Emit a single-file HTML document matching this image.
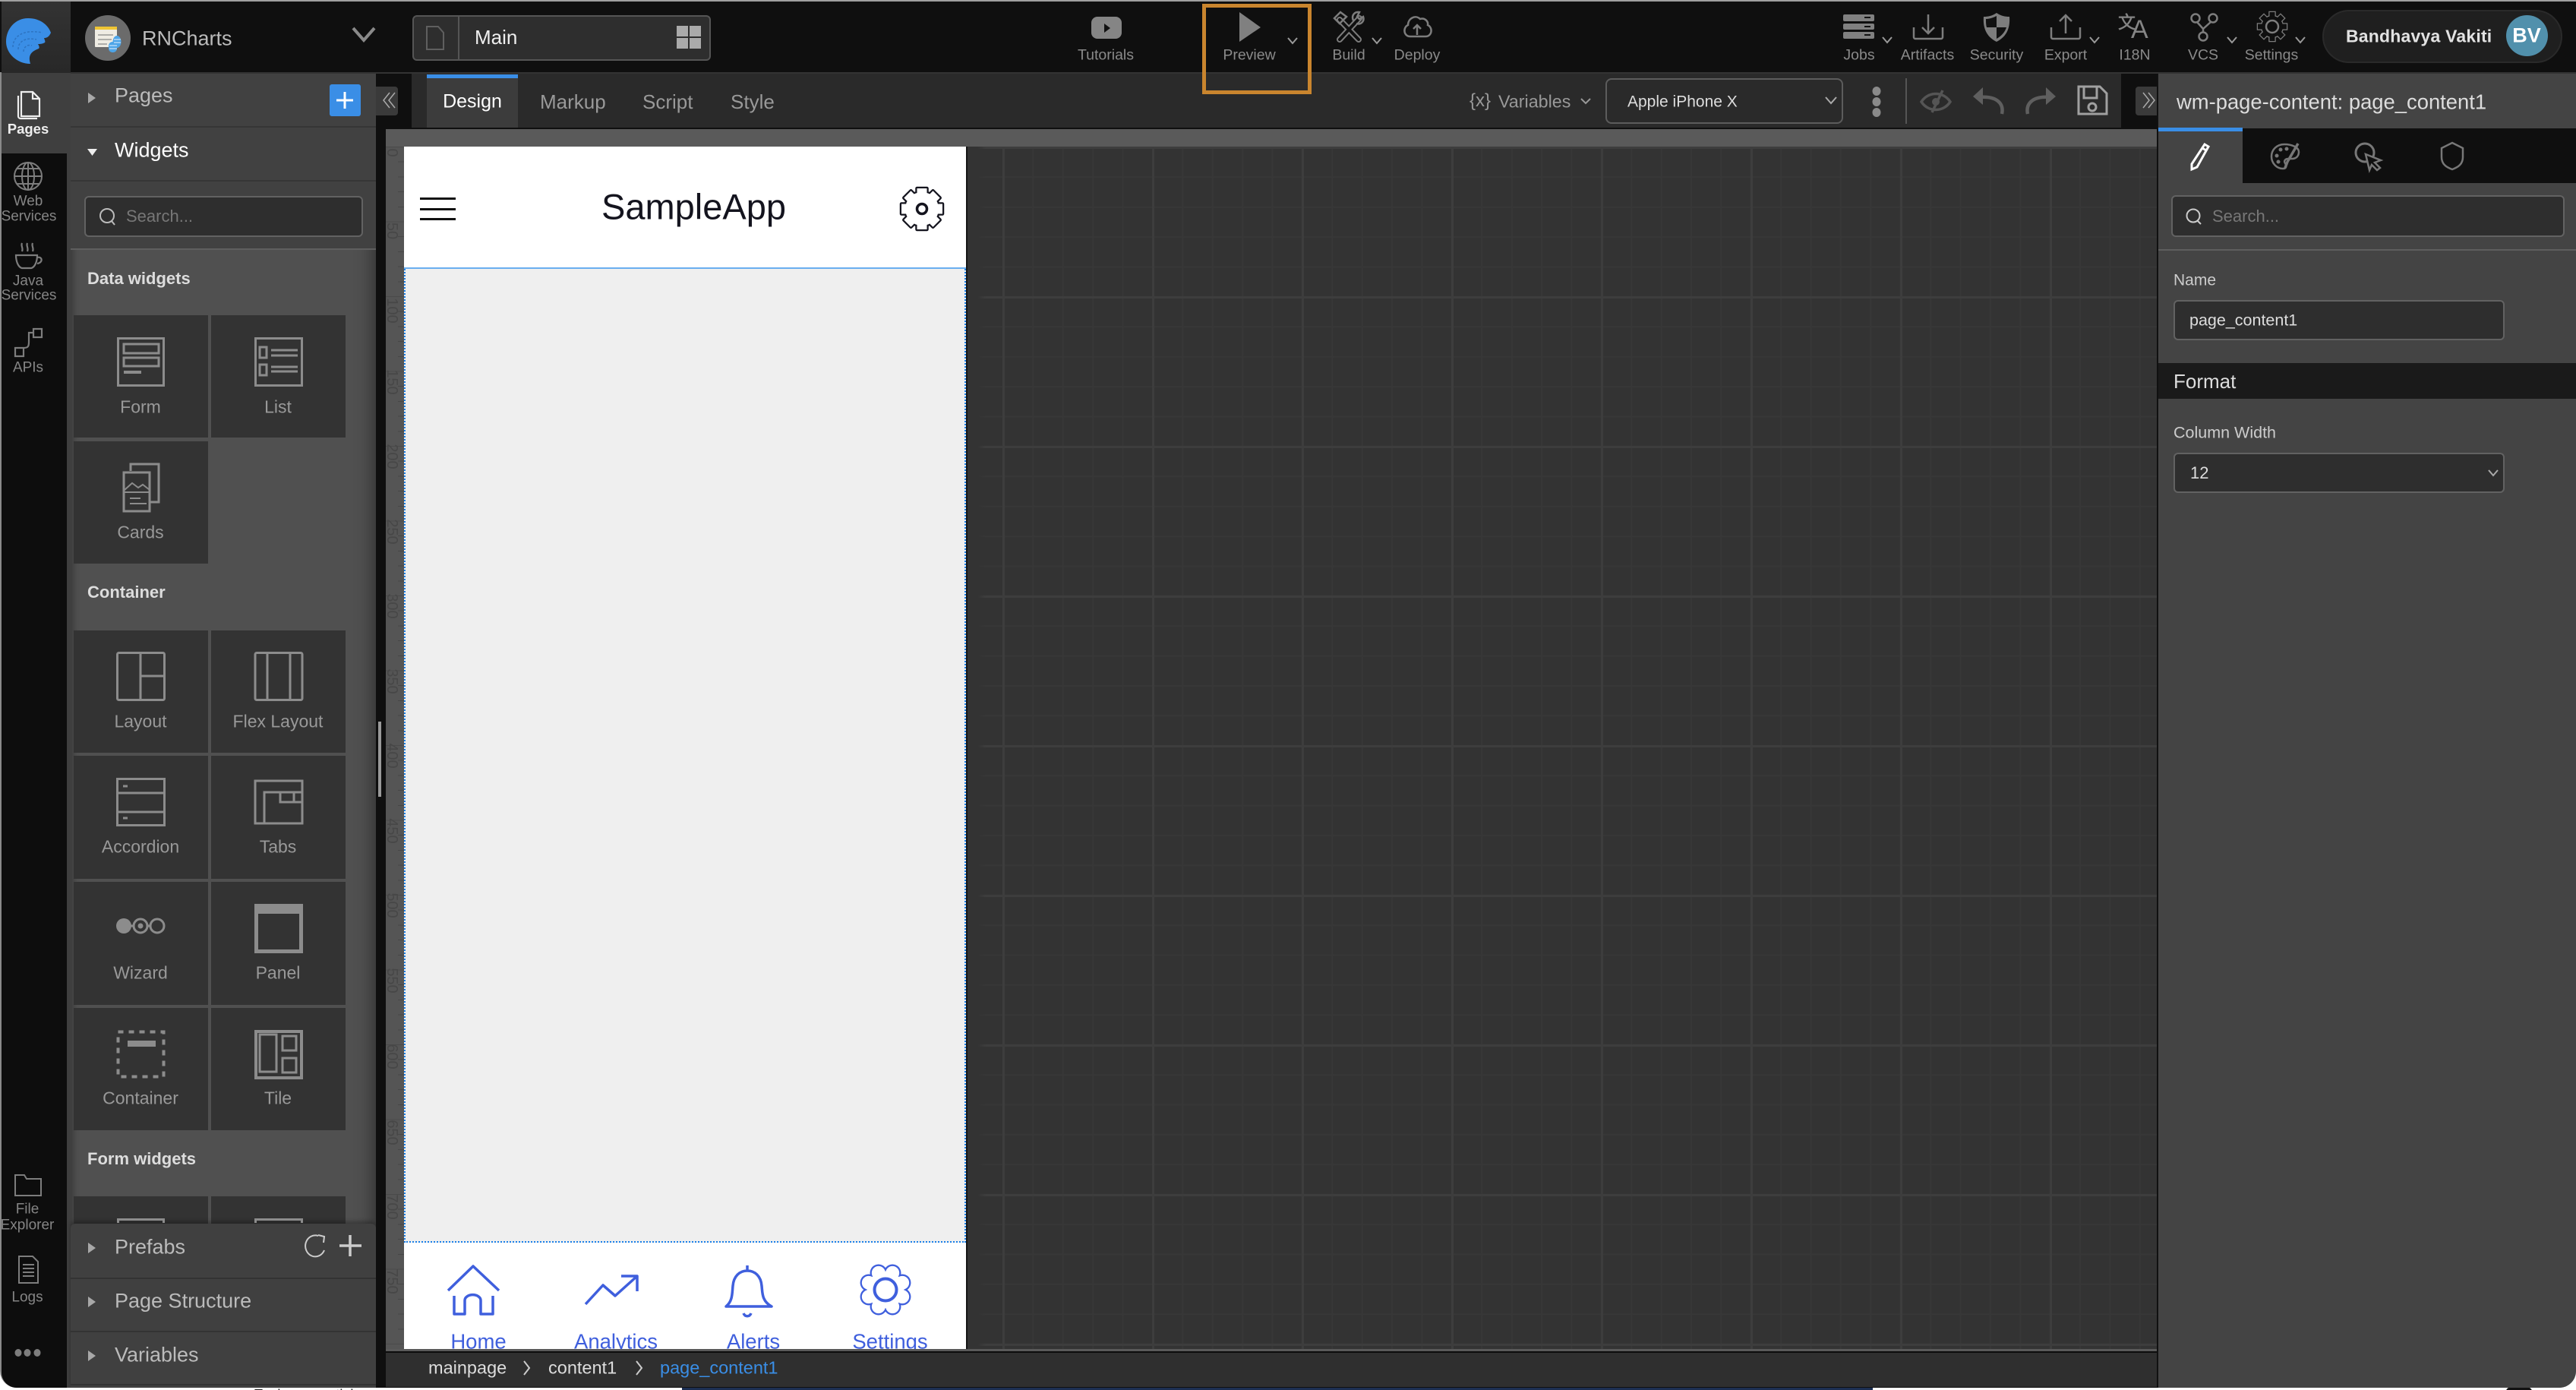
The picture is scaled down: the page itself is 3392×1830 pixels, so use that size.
<!DOCTYPE html>
<html lang="en"><head><meta charset="utf-8"><title>RNCharts</title>
<style>
html,body{margin:0;padding:0;background:#fff;width:3392px;height:1830px;overflow:hidden}
*{box-sizing:border-box}
body{font-family:"Liberation Sans","Noto Sans CJK SC",sans-serif;position:relative}
.b{position:absolute}
.t,.c{position:absolute;white-space:nowrap;line-height:1;transform:translateY(-50%)}
.c{transform:translate(-50%,-50%);text-align:center}
.lbl{font-size:19.5px;color:#8a8a8a}
.rail{font-size:19px;color:#858585}
.w{font-size:23px;color:#999}
.cell{position:absolute;background:#333;width:177px}
.h{font-size:22px;font-weight:700;color:#ddd}
.p{font-size:27px;color:#bbb}
.tab{font-size:26px;color:#999}
.input{position:absolute;background:#2e2e2e;border:2px solid #626262;border-radius:6px}
.nav{font-size:27.5px;color:#3f5fdd}
svg{position:absolute;left:0;top:0}
</style></head><body>
<div class="b" style="left:335px;top:1826px;font-size:18px;color:#222">Tuning essentials</div>
<div class="b" style="left:898px;top:1826px;width:1568px;height:4px;background:#1c2f52"></div>
<div class="b" style="left:3300px;top:1824px;width:34px;height:14px;border-radius:50%;background:#111"></div>

<div class="b" id="app" style="left:0;top:0;width:3392px;height:1827px;background:#444;border-radius:0 0 22px 22px;overflow:hidden;border-left:2px solid #8a8a8a;border-top:2px solid #9a9a9a">
<div class="b" style="left:-2px;top:-2px;width:3394px;height:97px;background:#0f0f0f"></div>
</div>
<div class="b" style="left:0;top:0;width:3392px;height:2px;background:#a0a0a0"></div>
<div class="b" style="left:0;top:2px;width:3392px;height:93px;background:#0f0f0f"></div>
<div class="b" style="left:2px;top:2px;width:91px;height:94px;background:linear-gradient(#333,#282828)"></div>
<div class="b" style="left:93px;top:95px;width:3299px;height:2px;background:#333"></div>

<!-- left rail -->
<div class="b" style="left:2px;top:96px;width:91px;height:1731px;background:#3f3f3f;border-bottom-left-radius:20px"></div>
<div class="b" style="left:2px;top:202px;width:86px;height:1625px;background:#0d0d0d;border-bottom-left-radius:20px"></div>

<!-- sidebar -->
<div class="b" style="left:93px;top:97px;width:402px;height:1730px;background:#505050;box-shadow:inset 4px 0 8px #3b3b3b,inset -16px 0 18px -8px #3a3a3a"></div>
<div class="b" style="left:93px;top:97px;width:402px;height:231px;background:#414141"></div>
<div class="b" style="left:93px;top:166px;width:402px;height:2px;background:#363636"></div>
<div class="b" style="left:93px;top:237px;width:402px;height:2px;background:#363636"></div>
<div class="b" style="left:93px;top:327px;width:402px;height:2px;background:#5e5e5e"></div>
<div class="b" style="left:434px;top:111px;width:41px;height:42px;background:#3a8ee6;border-radius:3px"></div>
<div class="input" style="left:111px;top:258px;width:367px;height:54px"></div>

<div class="cell" style="left:97px;top:415px;height:161px"></div><div class="cell" style="left:278px;top:415px;height:161px"></div>
<div class="cell" style="left:97px;top:581px;height:161px"></div>
<div class="cell" style="left:97px;top:830px;height:161px"></div><div class="cell" style="left:278px;top:830px;height:161px"></div>
<div class="cell" style="left:97px;top:995px;height:162px"></div><div class="cell" style="left:278px;top:995px;height:162px"></div>
<div class="cell" style="left:97px;top:1161px;height:162px"></div><div class="cell" style="left:278px;top:1161px;height:162px"></div>
<div class="cell" style="left:97px;top:1327px;height:161px"></div><div class="cell" style="left:278px;top:1327px;height:161px"></div>
<div class="cell" style="left:97px;top:1575px;height:40px"></div><div class="cell" style="left:278px;top:1575px;height:40px"></div>

<div class="b" style="left:93px;top:1611px;width:402px;height:216px;background:#404040;border-radius:6px 6px 0 0;box-shadow:0 -3px 6px rgba(0,0,0,.3)"></div>
<div class="b" style="left:93px;top:1682px;width:402px;height:2px;background:#333"></div>
<div class="b" style="left:93px;top:1752px;width:402px;height:2px;background:#333"></div>
<div class="b" style="left:93px;top:1822px;width:402px;height:2px;background:#333"></div>

<!-- center -->
<div class="b" style="left:495px;top:97px;width:2345px;height:1730px;background:#0f0f0f"></div>
<div class="b" style="left:542px;top:97px;width:2251px;height:71px;background:#2a2a2a"></div>
<div class="b" style="left:562px;top:98px;width:120px;height:70px;background:#3c3c3c"></div>
<div class="b" style="left:562px;top:98px;width:120px;height:5px;background:#3a8ee6"></div>
<div class="b" style="left:495px;top:114px;width:29px;height:38px;background:#3a3a3a;border-radius:0 4px 4px 0"></div>
<div class="b" style="left:2812px;top:114px;width:30px;height:38px;background:#3a3a3a;border-radius:4px 0 0 4px"></div>
<div class="b" style="left:2114px;top:103px;width:313px;height:60px;border:2px solid #5c5c5c;border-radius:8px;background:#2a2a2a"></div>

<div class="b" style="left:508px;top:170px;width:2332px;height:23px;background:#5a5a5a"></div>
<div class="b" style="left:508px;top:193px;width:24px;height:1584px;background:#555"></div>
<div class="b" style="left:524px;top:193px;width:8px;height:1584px;background:repeating-linear-gradient(180deg,#474747 0 1px,transparent 1px 19.7px)"></div>
<div class="b" style="left:508px;top:193px;width:24px;height:1584px;background:repeating-linear-gradient(180deg,#4a4a4a 0 1px,transparent 1px 98.5px)"></div>

<div class="b" style="left:1272px;top:193px;width:1568px;height:1584px;background-color:#333;background-image:linear-gradient(90deg,#3d3d3d 3px,transparent 3px),linear-gradient(180deg,#3d3d3d 3px,transparent 3px),linear-gradient(90deg,#373737 2px,transparent 2px),linear-gradient(180deg,#373737 2px,transparent 2px);background-size:197px 197px,197px 197px,39.4px 39.4px,39.4px 39.4px;background-position:48px 0,0 0,8.6px 0,0 0"></div>
<div class="b" style="left:1272px;top:193px;width:26px;height:1584px;background:linear-gradient(90deg,#333 60%,rgba(51,51,51,0))"></div>

<!-- phone -->
<div class="b" style="left:532px;top:193px;width:740px;height:1584px;background:#fff"></div>
<div class="b" style="left:532px;top:354px;width:740px;height:1282px;background:#efefef;border-left:2px dotted #1a80e8;border-right:2px dotted #1a80e8;border-bottom:2px dotted #1a80e8"></div>
<div class="b" style="left:532px;top:352px;width:740px;height:2px;background:#6aaef0"></div>
<div class="b" style="left:1272px;top:193px;width:2px;height:1584px;background:#151515"></div>
<div class="b" style="left:553px;top:260px;width:47px;height:3px;background:#111"></div>
<div class="b" style="left:553px;top:274px;width:47px;height:3px;background:#111"></div>
<div class="b" style="left:553px;top:287px;width:47px;height:3px;background:#111"></div>
<div class="t" style="left:792px;top:272px;font-size:47px;color:#14141e">SampleApp</div>

<div class="c nav" style="left:630px;top:1766px">Home</div>
<div class="c nav" style="left:811px;top:1766px">Analytics</div>
<div class="c nav" style="left:992px;top:1766px">Alerts</div>
<div class="c nav" style="left:1172px;top:1766px">Settings</div>
<div class="b" style="left:532px;top:1777px;width:740px;height:50px;background:#0f0f0f"></div>

<!-- status bar -->
<div class="b" style="left:508px;top:1776px;width:2332px;height:3px;background:#5a5a5a"></div>
<div class="b" style="left:508px;top:1779px;width:2332px;height:2px;background:#0d0d0d"></div>
<div class="b" style="left:508px;top:1781px;width:2332px;height:45px;background:#2f2f2f"></div>
<div class="t" style="left:564px;top:1801px;font-size:23.5px;color:#ddd">mainpage</div>
<div class="t" style="left:722px;top:1801px;font-size:23.5px;color:#ddd">content1</div>
<div class="t" style="left:869px;top:1801px;font-size:23.5px;color:#3a8ee6">page_content1</div>

<!-- right panel -->
<div class="b" style="left:2842px;top:97px;width:550px;height:1730px;background:#444;border-bottom-right-radius:22px"></div>
<div class="b" style="left:2840px;top:97px;width:2px;height:1730px;background:#111"></div>
<div class="b" style="left:2953px;top:169px;width:439px;height:72px;background:#0f0f0f"></div>
<div class="b" style="left:2842px;top:168px;width:111px;height:5px;background:#3a8ee6"></div>
<div class="t" style="left:2866px;top:134px;font-size:27.4px;color:#ddd">wm-page-content: page_content1</div>
<div class="input" style="left:2859px;top:257px;width:518px;height:55px"></div>
<div class="b" style="left:2842px;top:328px;width:550px;height:2px;background:#5e5e5e"></div>
<div class="t" style="left:2913px;top:285px;font-size:22px;color:#777">Search...</div>
<div class="t" style="left:2862px;top:369px;font-size:21px;color:#ccc">Name</div>
<div class="input" style="left:2862px;top:395px;width:436px;height:53px"></div>
<div class="t" style="left:2883px;top:422px;font-size:21.5px;color:#ddd">page_content1</div>
<div class="b" style="left:2842px;top:478px;width:550px;height:47px;background:#1a1a1a"></div>
<div class="t" style="left:2862px;top:502px;font-size:26px;color:#ddd">Format</div>
<div class="t" style="left:2862px;top:570px;font-size:21.5px;color:#ccc">Column Width</div>
<div class="input" style="left:2862px;top:596px;width:436px;height:53px"></div>
<div class="t" style="left:2884px;top:623px;font-size:22px;color:#ddd">12</div>

<!-- top bar -->
<div class="t" style="left:187px;top:51px;font-size:27px;color:#bbb">RNCharts</div>
<div class="b" style="left:543px;top:20px;width:393px;height:60px;background:#2e2e2e;border:2px solid #555;border-radius:6px"></div>
<div class="b" style="left:603px;top:21px;width:2px;height:58px;background:#555"></div>
<div class="t" style="left:625px;top:49px;font-size:26px;color:#eee">Main</div>

<div class="c lbl" style="left:1456px;top:73px">Tutorials</div>
<div class="c lbl" style="left:1645px;top:73px">Preview</div>
<div class="c lbl" style="left:1776px;top:73px">Build</div>
<div class="c lbl" style="left:1866px;top:73px">Deploy</div>
<div class="c lbl" style="left:2448px;top:73px">Jobs</div>
<div class="c lbl" style="left:2538px;top:73px">Artifacts</div>
<div class="c lbl" style="left:2629px;top:73px">Security</div>
<div class="c lbl" style="left:2720px;top:73px">Export</div>
<div class="c lbl" style="left:2811px;top:73px">I18N</div>
<div class="c lbl" style="left:2901px;top:73px">VCS</div>
<div class="c lbl" style="left:2991px;top:73px">Settings</div>

<div class="b" style="left:3058px;top:13px;width:316px;height:70px;background:#1f1f1f;border:2px solid #2a2a2a;border-radius:35px"></div>
<div class="t" style="left:3089px;top:48px;font-size:23px;font-weight:700;color:#e2e2e2;letter-spacing:.2px">Bandhavya Vakiti</div>
<div class="b" style="left:3300px;top:20px;width:55px;height:54px;border-radius:50%;background:#5190ac"></div>
<div class="c" style="left:3327px;top:47px;font-size:27px;font-weight:700;color:#fff">BV</div>

<div class="b" style="left:1583px;top:5px;width:144px;height:119px;border:5px solid #c9852e"></div>

<!-- rail labels -->
<div class="c" style="left:37px;top:170px;font-size:18.5px;font-weight:700;color:#eee">Pages</div>
<div class="c rail" style="left:37px;top:265px">Web</div><div class="c rail" style="left:38px;top:285px">Services</div>
<div class="c rail" style="left:37px;top:370px">Java</div><div class="c rail" style="left:38px;top:389px">Services</div>
<div class="c rail" style="left:37px;top:484px">APIs</div>
<div class="c rail" style="left:36px;top:1592px">File</div><div class="c rail" style="left:36px;top:1613px">Explorer</div>
<div class="c rail" style="left:36px;top:1708px">Logs</div>

<!-- sidebar labels -->
<div class="t p" style="left:151px;top:126px">Pages</div>
<div class="t p" style="left:151px;top:198px;color:#fff">Widgets</div>
<div class="t" style="left:166px;top:285px;font-size:22px;color:#777">Search...</div>
<div class="t h" style="left:115px;top:367px">Data widgets</div>
<div class="t h" style="left:115px;top:780px">Container</div>
<div class="t h" style="left:115px;top:1526px">Form widgets</div>
<div class="t p" style="left:151px;top:1642px">Prefabs</div>
<div class="t p" style="left:151px;top:1713px">Page Structure</div>
<div class="t p" style="left:151px;top:1784px">Variables</div>
<div class="c w" style="left:185px;top:536px">Form</div><div class="c w" style="left:366px;top:536px">List</div>
<div class="c w" style="left:185px;top:701px">Cards</div>
<div class="c w" style="left:185px;top:950px">Layout</div><div class="c w" style="left:366px;top:950px">Flex Layout</div>
<div class="c w" style="left:185px;top:1115px">Accordion</div><div class="c w" style="left:366px;top:1115px">Tabs</div>
<div class="c w" style="left:185px;top:1281px">Wizard</div><div class="c w" style="left:366px;top:1281px">Panel</div>
<div class="c w" style="left:185px;top:1446px">Container</div><div class="c w" style="left:366px;top:1446px">Tile</div>

<!-- tabs -->
<div class="c tab" style="left:622px;top:134px;color:#fff;font-size:25px">Design</div>
<div class="t tab" style="left:711px;top:134px">Markup</div>
<div class="t tab" style="left:846px;top:134px">Script</div>
<div class="t tab" style="left:962px;top:134px">Style</div>
<div class="t" style="left:1935px;top:133px;font-size:24px;color:#999">{x}</div>
<div class="t" style="left:1973px;top:134px;font-size:23.3px;color:#999">Variables</div>
<div class="t" style="left:2143px;top:134px;font-size:21px;color:#ddd">Apple iPhone X</div>

<!-- ruler labels -->
<div class="c" style="left:516px;top:201px;font-size:20px;color:#474747;transform:translate(-50%,-50%) rotate(90deg)">0</div>
<div class="c" style="left:516px;top:304px;font-size:20px;color:#474747;transform:translate(-50%,-50%) rotate(90deg)">50</div>
<div class="c" style="left:516px;top:409px;font-size:20px;color:#474747;transform:translate(-50%,-50%) rotate(90deg)">100</div>
<div class="c" style="left:516px;top:503px;font-size:20px;color:#474747;transform:translate(-50%,-50%) rotate(90deg)">150</div>
<div class="c" style="left:516px;top:601px;font-size:20px;color:#474747;transform:translate(-50%,-50%) rotate(90deg)">200</div>
<div class="c" style="left:516px;top:700px;font-size:20px;color:#474747;transform:translate(-50%,-50%) rotate(90deg)">250</div>
<div class="c" style="left:516px;top:798px;font-size:20px;color:#474747;transform:translate(-50%,-50%) rotate(90deg)">300</div>
<div class="c" style="left:516px;top:897px;font-size:20px;color:#474747;transform:translate(-50%,-50%) rotate(90deg)">350</div>
<div class="c" style="left:516px;top:995px;font-size:20px;color:#474747;transform:translate(-50%,-50%) rotate(90deg)">400</div>
<div class="c" style="left:516px;top:1094px;font-size:20px;color:#474747;transform:translate(-50%,-50%) rotate(90deg)">450</div>
<div class="c" style="left:516px;top:1192px;font-size:20px;color:#474747;transform:translate(-50%,-50%) rotate(90deg)">500</div>
<div class="c" style="left:516px;top:1291px;font-size:20px;color:#474747;transform:translate(-50%,-50%) rotate(90deg)">550</div>
<div class="c" style="left:516px;top:1391px;font-size:20px;color:#474747;transform:translate(-50%,-50%) rotate(90deg)">600</div>
<div class="c" style="left:516px;top:1491px;font-size:20px;color:#474747;transform:translate(-50%,-50%) rotate(90deg)">650</div>
<div class="c" style="left:516px;top:1589px;font-size:20px;color:#474747;transform:translate(-50%,-50%) rotate(90deg)">700</div>
<div class="c" style="left:516px;top:1687px;font-size:20px;color:#474747;transform:translate(-50%,-50%) rotate(90deg)">750</div>

<!-- icons -->
<svg width="3392" height="1830" viewBox="0 0 3392 1830" fill="none">
<defs>
<g id="g8"><rect x="-6.5" y="-27" width="13" height="54"/><rect x="-6.5" y="-27" width="13" height="54" transform="rotate(45)"/><rect x="-6.5" y="-27" width="13" height="54" transform="rotate(90)"/><rect x="-6.5" y="-27" width="13" height="54" transform="rotate(135)"/><circle r="22"/></g>
<g id="l8"><rect x="-9" y="-33" width="18" height="66" rx="9"/><rect x="-9" y="-33" width="18" height="66" rx="9" transform="rotate(45)"/><rect x="-9" y="-33" width="18" height="66" rx="9" transform="rotate(90)"/><rect x="-9" y="-33" width="18" height="66" rx="9" transform="rotate(135)"/><circle r="24"/></g>
<g id="s8"><rect x="-3.5" y="-19" width="7" height="38"/><rect x="-3.5" y="-19" width="7" height="38" transform="rotate(45)"/><rect x="-3.5" y="-19" width="7" height="38" transform="rotate(90)"/><rect x="-3.5" y="-19" width="7" height="38" transform="rotate(135)"/><circle r="14"/></g>
</defs>

<!-- logo -->
<path fill="#3a8ee6" d="M37 24C52 24 63 32 67 43C64 50 60 50 58 50C59 53 60 55 59 56C56 58 52 58 50 58C52 61 52 63 51 64C46 66 42 68 40 72C38 76 39 80 40 84C22 84 8 70 8 55C8 38 20 24 37 24Z"/>
<path stroke="#2d74c2" stroke-width="1.5" stroke-dasharray="3 2" d="M17 62C17 48 30 38 56 43M24 65C24 54 34 49 48 52M31 68C31 62 36 58 42 60"/>
<!-- app icon -->
<circle cx="142" cy="50" r="30" fill="#6b6b6b"/>
<rect x="125" y="35" width="29" height="27" rx="1" fill="#efece3"/><rect x="125" y="35" width="29" height="4" fill="#efc534"/>
<path stroke="#888" stroke-width="1.3" d="M129 46h20M129 52h18M129 58h12"/>
<ellipse cx="154" cy="55" rx="5.5" ry="8" fill="#4ea5e8"/><rect x="143" y="55" width="11" height="14" rx="5" fill="#4ea5e8"/><path stroke="#e8f4ff" stroke-width="1" d="M144 60h10M144 64h10M150 52h9M150 56h9"/>
<path stroke="#8a8a8a" stroke-width="4" d="M465 37l14 16 14-16"/>
<!-- main -->
<path stroke="#5f5f5f" stroke-width="2" d="M562 35h15l7 8v22h-22z"/>
<path fill="#aaa" d="M891 34h15v14h-15zM908 34h15v14h-15zM891 50h15v14h-15zM908 50h15v14h-15z"/>

<!-- top icons -->
<rect x="1437" y="22" width="40" height="29" rx="8" fill="#858585"/><path fill="#111" d="M1454 31l8 6-8 6z"/>
<path fill="#808080" d="M1632 16l28 20-28 19z"/>
<g stroke="#9a9a9a" stroke-width="2"><path d="M1696 50l6 7 6-7M1807 50l6 7 6-7M2479 49l6 7 6-7M2752 49l6 7 6-7M2933 49l6 7 6-7M3023 49l6 7 6-7"/></g>
<path stroke="#7d7d7d" stroke-width="8" stroke-linecap="round" d="M1764 26L1789 52M1790 24L1764 52"/><path stroke="#0f0f0f" stroke-width="4" stroke-linecap="round" d="M1764 26L1789 52M1790 24L1764 52"/>
<path stroke="#7d7d7d" stroke-width="2.5" d="M1757 24l8-8 8 6-9 9zM1782 27c-3-7 2-12 8-11l-3 6 3 3 5-3c2 6-3 11-9 9"/>
<path stroke="#7d7d7d" stroke-width="2.5" d="M1857 48c-9 0-10-12-3-15 0-9 10-14 16-8 6-2 11 3 10 8 7 3 6 15-3 15z"/><path stroke="#7d7d7d" stroke-width="2.5" d="M1866 46V33m-5 5l5-5 5 5"/>
<g fill="#808080"><rect x="2427" y="19" width="41" height="9" rx="2"/><rect x="2427" y="31" width="41" height="8" rx="2"/><rect x="2427" y="42" width="41" height="9" rx="2"/></g>
<path stroke="#111" stroke-width="2" d="M2455 23h8M2455 35h8M2455 46h8"/>
<path stroke="#7d7d7d" stroke-width="2.5" d="M2520 36v13a2 2 0 0 0 2 2h34a2 2 0 0 0 2-2V36M2539 19v25m-8-8l8 8 8-8"/>
<path fill="#7d7d7d" d="M2629 17c6 4 11 5 17 5 1 14-3 26-17 33-14-7-18-19-17-33 6 0 11-1 17-5z"/><path fill="#111" d="M2629 21v15h-13c-1-3-1-7-1-11 5 0 10-2 14-4zM2629 36h13c-2 6-6 11-13 15z"/>
<path stroke="#7d7d7d" stroke-width="2.5" d="M2701 36v13a2 2 0 0 0 2 2h34a2 2 0 0 0 2-2V36M2720 44V20m-8 8l8-8 8 8"/>
<text x="2789" y="37" font-size="23" fill="#858585" stroke="#858585" stroke-width=".5" font-family="'Noto Sans CJK SC',sans-serif">文</text><text x="2806" y="50" font-size="34" fill="#858585" font-family="'Liberation Sans',sans-serif">A</text>
<g stroke="#7d7d7d" stroke-width="2.5"><circle cx="2891" cy="24" r="5.5"/><circle cx="2914" cy="24" r="5.5"/><circle cx="2901" cy="48" r="5.5"/><path d="M2893 29l8 9 10-9M2901 38v4"/></g>
<use href="#s8" x="2992" y="35" stroke="#7d7d7d" stroke-width="2.5"/><use href="#s8" x="2992" y="35" fill="#0f0f0f"/><circle cx="2992" cy="35" r="8" stroke="#7d7d7d" stroke-width="2.5"/>

<!-- rail icons -->
<path stroke="#eee" stroke-width="2.2" d="M28 121h15l9 9v23H28zM43 121v9h9M24 126v27a3 3 0 0 0 3 3h22"/>
<g stroke="#7d7d7d" stroke-width="2"><circle cx="37" cy="232" r="18"/><ellipse cx="37" cy="232" rx="8" ry="18"/><path d="M37 214v36M19 232h36M22 222h30M22 242h30"/></g>
<path stroke="#7d7d7d" stroke-width="2.2" d="M21 336h28c0 8-3 16-8 17H29c-5-1-8-9-8-17zM49 339c7-2 8 7 0 8M29 320c-2 4 2 6 0 11M36 320c-2 4 2 6 0 11M43 320c-2 4 2 6 0 11"/>
<path stroke="#7d7d7d" stroke-width="2.2" d="M44 433h11v11H44zM20 458h11v11H20zM31 458c6 0 7-2 7-8v-12h6"/>
<path stroke="#7d7d7d" stroke-width="2" d="M20 1574v-27h12l3 5h19v22z"/>
<path stroke="#7d7d7d" stroke-width="2" d="M25 1654h18l7 7v28H25zM30 1665h15M30 1670h15M30 1675h15M30 1680h15"/>
<g fill="#7d7d7d"><ellipse cx="24" cy="1781" rx="4.5" ry="5"/><ellipse cx="36" cy="1781" rx="4.5" ry="5"/><ellipse cx="49" cy="1781" rx="4.5" ry="5"/></g>

<!-- sidebar icons -->
<path fill="#a8a8a8" d="M116 122l10 7-10 7zM116 1636l10 7-10 7zM116 1707l10 7-10 7zM116 1778l10 7-10 7z"/>
<path fill="#eee" d="M115 196h13l-6.500 9z"/>
<path stroke="#fff" stroke-width="3" d="M454 121v22M443 132h22"/>
<path stroke="#aaa" stroke-width="1.500" d="M513 122l-8 10 8 10M520 122l-8 10 8 10"/>
<circle cx="141" cy="284" r="9" stroke="#bbb" stroke-width="2"/><path stroke="#bbb" stroke-width="2" d="M147 291l4 5"/>
<path stroke="#ccc" stroke-width="2" d="M419 1627A13 14 0 1 0 427 1646M419 1626l8 2-1 8"/>
<path stroke="#ccc" stroke-width="3.500" d="M461 1626v28M447 1640h29"/>
<rect x="498" y="950" width="4" height="99" fill="#9a9a9a"/>

<g stroke="#8c8c8c" stroke-width="3">
<rect x="155.500" y="445.500" width="60" height="62"/><rect x="163" y="453" width="46" height="12"/><rect x="163" y="471" width="46" height="11"/>
<rect x="336.500" y="445.500" width="61" height="62"/><rect x="342" y="457" width="9" height="14"/><rect x="342" y="480" width="9" height="14"/><path d="M357 461h35M357 468h35M357 483h35M357 489h35"/>
<path d="M172 620v-9h37v50h-12"/><rect x="163" y="622" width="34" height="51"/><path stroke-width="2" d="M164 645l10-9 8 6 6-4 9 7M164 648h32M171 656h14M171 663h22"/>
<rect x="154.500" y="859.500" width="62" height="62" rx="2"/><path d="M185 860v62M185 890h31"/>
<rect x="336" y="859.500" width="62" height="62" rx="2"/><path d="M352 860v62M382 860v62"/>
<rect x="154.500" y="1025.500" width="62" height="61"/><path d="M155 1044h61M155 1069h61M162 1035h6M162 1077h6"/>
<rect x="336" y="1028" width="62" height="56"/><path d="M348 1084v-41h49M369 1043v13h28M387 1043v13"/>
<circle cx="185" cy="1219" r="9"/><circle cx="207" cy="1219" r="9"/><path d="M172 1219h4M194 1219h4"/>
<rect x="337.500" y="1192.500" width="59" height="60" stroke-width="5"/>
<rect x="155.500" y="1358.500" width="60" height="59" stroke-width="4" stroke-dasharray="7 7"/>
<rect x="337" y="1358" width="60" height="61" stroke-width="4"/><rect x="342" y="1362" width="22" height="49"/><rect x="372" y="1364" width="18" height="19"/><rect x="372" y="1393" width="18" height="19"/>
<path d="M155.500 1610v-4.500h60v4.500M336.500 1610v-4.500h61v4.500"/>
</g>
<path fill="#8c8c8c" d="M163 488h23v4h-23zM168 1370h37v8h-37zM338 1192h59v11h-59z"/>
<circle cx="163" cy="1219" r="10" fill="#8c8c8c"/><circle cx="185" cy="1219" r="3.500" fill="#8c8c8c"/>

<!-- toolbar -->
<path stroke="#999" stroke-width="2" d="M2082 130l6 6 6-6"/>
<path stroke="#aaa" stroke-width="2" d="M2404 128l7 8 7-8M3277 619l6 7 6-7"/>
<g fill="#8a8a8a"><ellipse cx="2471" cy="120" rx="5.500" ry="6"/><ellipse cx="2471" cy="134" rx="5.500" ry="6"/><ellipse cx="2471" cy="148" rx="5.500" ry="6"/></g>
<path stroke="#555" stroke-width="2" d="M2510 103v60"/>
<path stroke="#555" stroke-width="3.500" d="M2530 134c9-14 29-14 38 0-9 14-29 14-38 0zM2558 119l-14 29"/><circle cx="2549" cy="134" r="5" fill="#555"/>
<path stroke="#5f5f5f" stroke-width="4.500" d="M2636 150c3-14-7-24-30-22"/><path fill="#5f5f5f" d="M2598 127l13-12v23z"/>
<path stroke="#5f5f5f" stroke-width="4.500" d="M2670 150c-3-14 7-24 30-22"/><path fill="#5f5f5f" d="M2707 127l-13-12v23z"/>
<path stroke="#a0a0a0" stroke-width="3" d="M2737 114h28l9 9v27h-37zM2744 114v15h17v-15"/><circle cx="2755" cy="141" r="5" stroke="#a0a0a0" stroke-width="3"/>
<path stroke="#aaa" stroke-width="1.500" d="M2822 122l8 10-8 10M2829 122l8 10-8 10"/>
<!-- phone icons -->
<use href="#g8" x="1214" y="275" stroke="#14141e" stroke-width="4.500" stroke-linejoin="round"/><use href="#g8" x="1214" y="275" fill="#fff"/><circle cx="1214" cy="275" r="6.500" stroke="#14141e" stroke-width="3.500"/>
<g stroke="#3f5fdd" stroke-width="3.500" stroke-linejoin="round">
<path d="M590 1699l33-32 34 32"/>
<path d="M598 1706v24h14v-18a10 7 0 0 1 21 0v18h16v-24"/>
<path d="M771 1717l23-25 16 14 29-26M818 1680h21v20"/>
<path d="M984 1666v6M956 1720c9-7 8-18 9-27 1-13 9-20 19-20s18 7 19 20c1 9 0 20 13 27zM979 1729c2 5 8 5 10 0"/>
</g>
<g transform="translate(1166 1698) rotate(22.500)"><use href="#l8" stroke="#3f5fdd" stroke-width="4.500"/><use href="#l8" fill="#fff"/></g>
<circle cx="1166" cy="1698" r="14.500" stroke="#3f5fdd" stroke-width="4"/>
<path stroke="#ccc" stroke-width="2" d="M690 1792l7 9-7 9M838 1792l7 9-7 9"/>
<!-- right tab icons -->
<path stroke="#fff" stroke-width="3" d="M2903 190l5 3-15 27-7 3v-7zM2900 195l5 3"/>
<path stroke="#777" stroke-width="2.500" d="M3008 190c-10 0-17 7-17 16s7 16 15 16c5 0 5-4 3-7s0-6 4-6h5c6 0 9-4 9-9 0-6-9-10-19-10z"/>
<g fill="#777"><circle cx="3003" cy="197" r="2.500"/><circle cx="3011" cy="196" r="2.500"/><circle cx="2998" cy="205" r="2.500"/><circle cx="3000" cy="213" r="2.500"/></g>
<path stroke="#444" stroke-width="1" d="M3026 189l-15 26"/><path stroke="#777" stroke-width="3.500" d="M3026 189l-14 24-3 8"/>
<circle cx="3114" cy="201" r="12" stroke="#777" stroke-width="3"/>
<path fill="#0f0f0f" stroke="#777" stroke-width="2.500" d="M3115 203l20 8-8 3 7 7-4 3-7-7-3 7z"/>
<path stroke="#777" stroke-width="2.500" d="M3229 188l14 7v12c0 9-6 13-14 16-8-3-14-7-14-16v-12z"/>
<circle cx="2888" cy="284" r="8.500" stroke="#ccc" stroke-width="2"/><path stroke="#ccc" stroke-width="2" d="M2894 291l4 4"/>
</svg>
</body></html>
